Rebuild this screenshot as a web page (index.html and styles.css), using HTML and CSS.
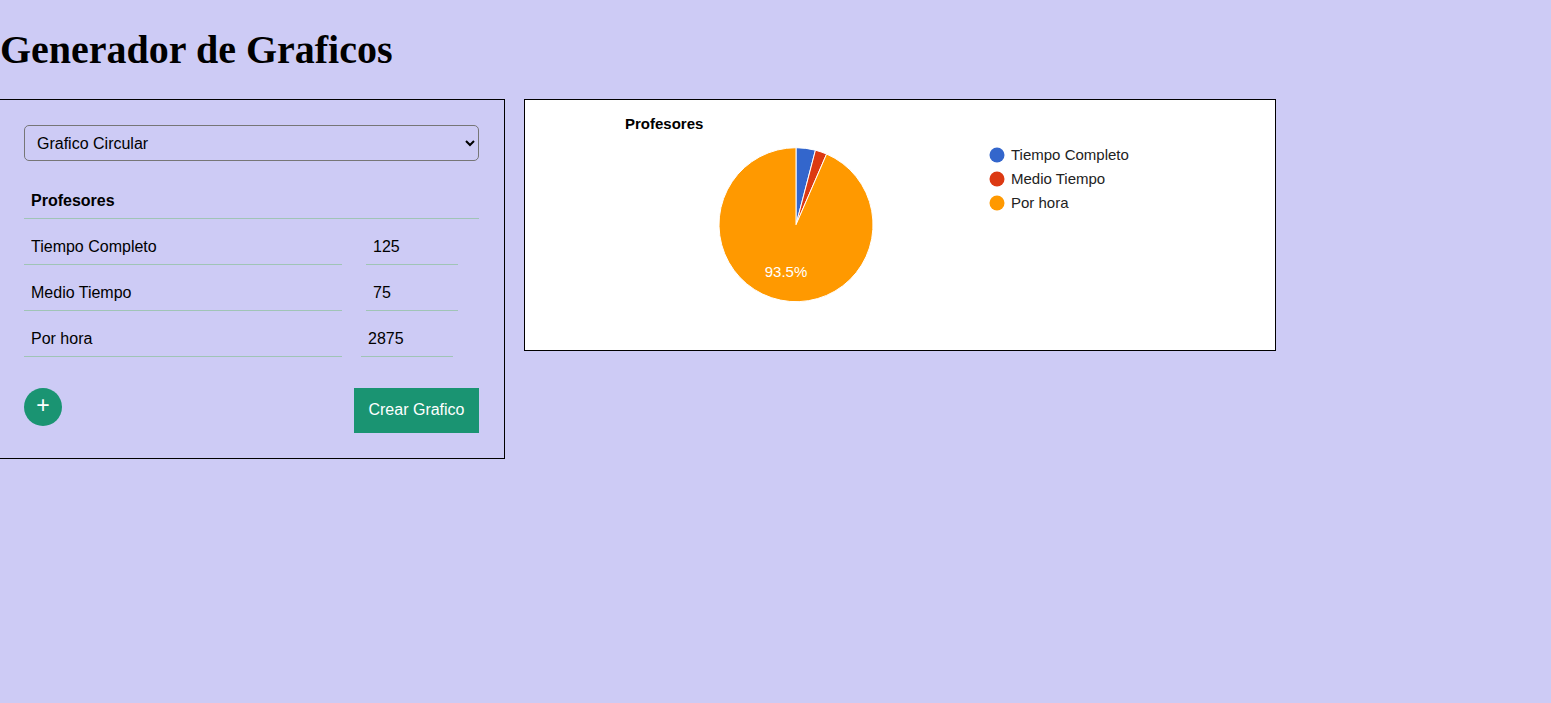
FILE: index.html
```html
<!DOCTYPE html>
<html lang="es">
<head>
<meta charset="utf-8">
<title>Generador de Graficos</title>
<link rel="stylesheet" href="styles.css">
</head>
<body>
<h1 class="title">Generador de Graficos</h1>
<div class="layout">
  <form class="panel">
    <select class="type-select">
      <option>Grafico Circular</option>
      <option>Grafico de Barras</option>
    </select>
    <div class="series-name">Profesores</div>
    <div class="row">
      <input class="label-input" type="text" value="Tiempo Completo">
      <input class="value-input" type="text" value="125">
    </div>
    <div class="row">
      <input class="label-input" type="text" value="Medio Tiempo">
      <input class="value-input" type="text" value="75">
    </div>
    <div class="row">
      <input class="label-input" type="text" value="Por hora">
      <input class="value-input value-input--shift" type="text" value="2875">
    </div>
    <div class="actions">
      <button type="button" class="add-btn">+</button>
      <button type="button" class="create-btn">Crear Grafico</button>
    </div>
  </form>
  <div class="chart">
    <svg class="chart-svg" width="750" height="250" viewBox="0 0 750 250" xmlns="http://www.w3.org/2000/svg">
      <text x="100" y="29" class="chart-title">Profesores</text>
      <g stroke="#ffffff" stroke-width="1">
        <path d="M271 124.7 L271 47.7 A77 77 0 0 1 290.45 50.2 Z" fill="#3366cc"/>
        <path d="M271 124.7 L290.45 50.2 A77 77 0 0 1 301.6 54.04 Z" fill="#dc3912"/>
        <path d="M271 124.7 L301.6 54.04 A77 77 0 1 1 271 47.7 Z" fill="#ff9900"/>
      </g>
      <text x="261" y="177" class="slice-label" text-anchor="middle">93.5%</text>
      <circle cx="472" cy="55" r="7.5" fill="#3366cc"/>
      <text x="486" y="60" class="legend-text">Tiempo Completo</text>
      <circle cx="472" cy="79" r="7.5" fill="#dc3912"/>
      <text x="486" y="84" class="legend-text">Medio Tiempo</text>
      <circle cx="472" cy="103" r="7.5" fill="#ff9900"/>
      <text x="486" y="108" class="legend-text">Por hora</text>
    </svg>
  </div>
</div>
</body>
</html>
```
FILE: styles.css
```css
html, body {
  margin: 0;
  padding: 0;
  background: #cdcbf5;
}

body {
  font-family: "Liberation Sans", Arial, sans-serif;
  color: #000;
}

.title {
  font-family: "Liberation Serif", "Times New Roman", serif;
  font-size: 40px;
  font-weight: bold;
  margin: 27px 0 26px 0;
  line-height: 46px;
}

.layout {
  display: flex;
  align-items: flex-start;
  gap: 19px;
}

.panel {
  width: 455px;
  margin: 0 0 0 -1px;
  padding: 25px 25px 25px 24px;
  border: 1px solid #000;
  display: flex;
  flex-direction: column;
}

.type-select {
  width: 455px;
  height: 36px;
  margin: 0 0 20px 0;
  padding: 0 8px;
  font-family: "Liberation Sans", Arial, sans-serif;
  font-size: 16px;
  color: #000;
  background: transparent;
  border: 1px solid #767676;
  border-radius: 5px;
}

.series-name {
  font-weight: bold;
  font-size: 16px;
  line-height: 18px;
  padding: 11px 7px 8px 7px;
  border-bottom: 1px solid #a0c4b6;
}

.row {
  display: flex;
  gap: 24px;
}

.label-input,
.value-input {
  box-sizing: border-box;
  height: 46px;
  padding: 19px 7px 8px 7px;
  font-family: "Liberation Sans", Arial, sans-serif;
  font-size: 16px;
  line-height: 18px;
  color: #000;
  background: transparent;
  border: none;
  border-bottom: 1px solid #a0c4b6;
  outline: none;
}

.label-input {
  width: 318px;
}

.value-input {
  width: 92px;
}

.value-input--shift {
  margin-left: -5px;
}

.actions {
  display: flex;
  justify-content: space-between;
  align-items: flex-start;
  margin-top: 31px;
}

.add-btn {
  width: 38px;
  height: 38px;
  border-radius: 50%;
  border: none;
  background: #1a9472;
  color: #fff;
  font-family: "Liberation Sans", Arial, sans-serif;
  font-size: 23px;
  font-weight: normal;
  line-height: 1;
  padding: 0 0 3px 0;
  display: flex;
  align-items: center;
  justify-content: center;
}

.create-btn {
  width: 125px;
  height: 45px;
  border: none;
  background: #1a9472;
  color: #fff;
  font-family: "Liberation Sans", Arial, sans-serif;
  font-size: 16px;
  padding: 0 0 2px 0;
}

.chart {
  width: 750px;
  height: 250px;
  border: 1px solid #000;
  background: #fff;
}

.chart-svg {
  display: block;
  font-family: "Liberation Sans", Arial, sans-serif;
}

.chart-title {
  font-size: 15px;
  font-weight: bold;
  fill: #000;
}

.slice-label {
  font-size: 15px;
  fill: #ffffff;
}

.legend-text {
  font-size: 15px;
  fill: #222222;
}
```
